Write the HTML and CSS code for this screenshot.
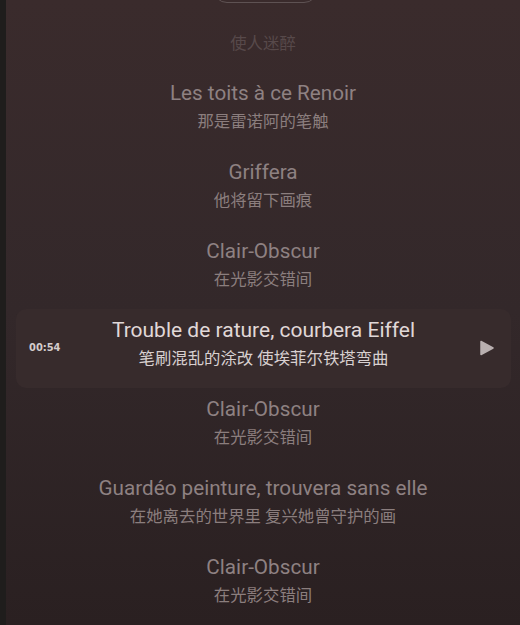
FILE: index.html
```html
<!DOCTYPE html>
<html lang="zh">
<head>
<meta charset="utf-8">
<link rel="stylesheet" href="styles.css">
</head>
<body>
<div class="screen">
  <div class="strip"></div>
  <main class="lyrics">
    <div class="top-pill"></div>
    <div class="lead">
      <div class="sub faint">使人迷醉</div>
    </div>
    <div class="line">
      <div class="title">Les toits à ce Renoir</div>
      <div class="sub">那是雷诺阿的笔触</div>
    </div>
    <div class="line">
      <div class="title">Griffera</div>
      <div class="sub">他将留下画痕</div>
    </div>
    <div class="line">
      <div class="title">Clair-Obscur</div>
      <div class="sub">在光影交错间</div>
    </div>
    <div class="line active">
      <span class="time">00:54</span>
      <div class="text">
        <div class="title">Trouble de rature, courbera Eiffel</div>
        <div class="sub">笔刷混乱的涂改 使埃菲尔铁塔弯曲</div>
      </div>
      <svg class="play" width="14" height="16" viewBox="0 0 14 16"><path d="M1 1.5 L13 8 L1 14.5 Z" fill="#b9b0b0" stroke="#b9b0b0" stroke-width="1.5" stroke-linejoin="round"/></svg>
    </div>
    <div class="line">
      <div class="title">Clair-Obscur</div>
      <div class="sub">在光影交错间</div>
    </div>
    <div class="line">
      <div class="title">Guardéo peinture, trouvera sans elle</div>
      <div class="sub">在她离去的世界里 复兴她曾守护的画</div>
    </div>
    <div class="line">
      <div class="title">Clair-Obscur</div>
      <div class="sub">在光影交错间</div>
    </div>
  </main>
</div>
</body>
</html>
```
FILE: styles.css
```css
html, body {
  margin: 0;
  padding: 0;
  height: 100%;
  overflow: hidden;
}
body {
  background: #2c2222;
  font-family: Roboto, "Noto Sans CJK SC", sans-serif;
}
.screen {
  display: flex;
  height: 625px;
}
.strip {
  width: 6px;
  background: #1f1d1c;
}
.lyrics {
  position: relative;
  flex: 1;
  background: linear-gradient(to bottom, #3a2b2c 0%, #33282a 50%, #2a2021 100%);
  display: flex;
  flex-direction: column;
  text-align: center;
}
.top-pill {
  position: absolute;
  top: -26px;
  left: 207px;
  width: 103px;
  height: 27px;
  border: 1.5px solid #5e5253;
  border-radius: 14px;
}
.lead {
  height: 72px;
  padding-top: 29px;
  box-sizing: border-box;
}
.line {
  height: 79.5px;
  padding-top: 7px;
  box-sizing: border-box;
}
.title {
  font-size: 20.7px;
  line-height: 28px;
  color: #8e8182;
}
.sub {
  font-size: 16.4px;
  line-height: 30px;
  color: #8b7e7e;
}
.sub.faint {
  color: #57494a;
}
.line.active {
  height: 80px;
  margin: 0 9px 0 10px;
  padding: 7px 15px 0 15px;
  border-radius: 10px;
  background: #372b2c;
  display: grid;
  grid-template-columns: 1fr auto 1fr;
  align-items: center;
  align-content: start;
}
.line.active .text {
  grid-column: 2;
}
.line.active .title {
  font-size: 21px;
  color: #e0d8d8;
}
.line.active .sub {
  color: #d8d0d0;
}
.time {
  grid-column: 1;
  justify-self: start;
  margin-left: -2px;
  font-size: 11px;
  font-weight: bold;
  color: #d4cccc;
  font-family: "DejaVu Sans Condensed", "DejaVu Sans", sans-serif;
  font-stretch: condensed;
  margin-top: 6px;
}
.play {
  grid-column: 3;
  justify-self: end;
  margin-right: 2px;
  margin-top: 6px;
}
```
